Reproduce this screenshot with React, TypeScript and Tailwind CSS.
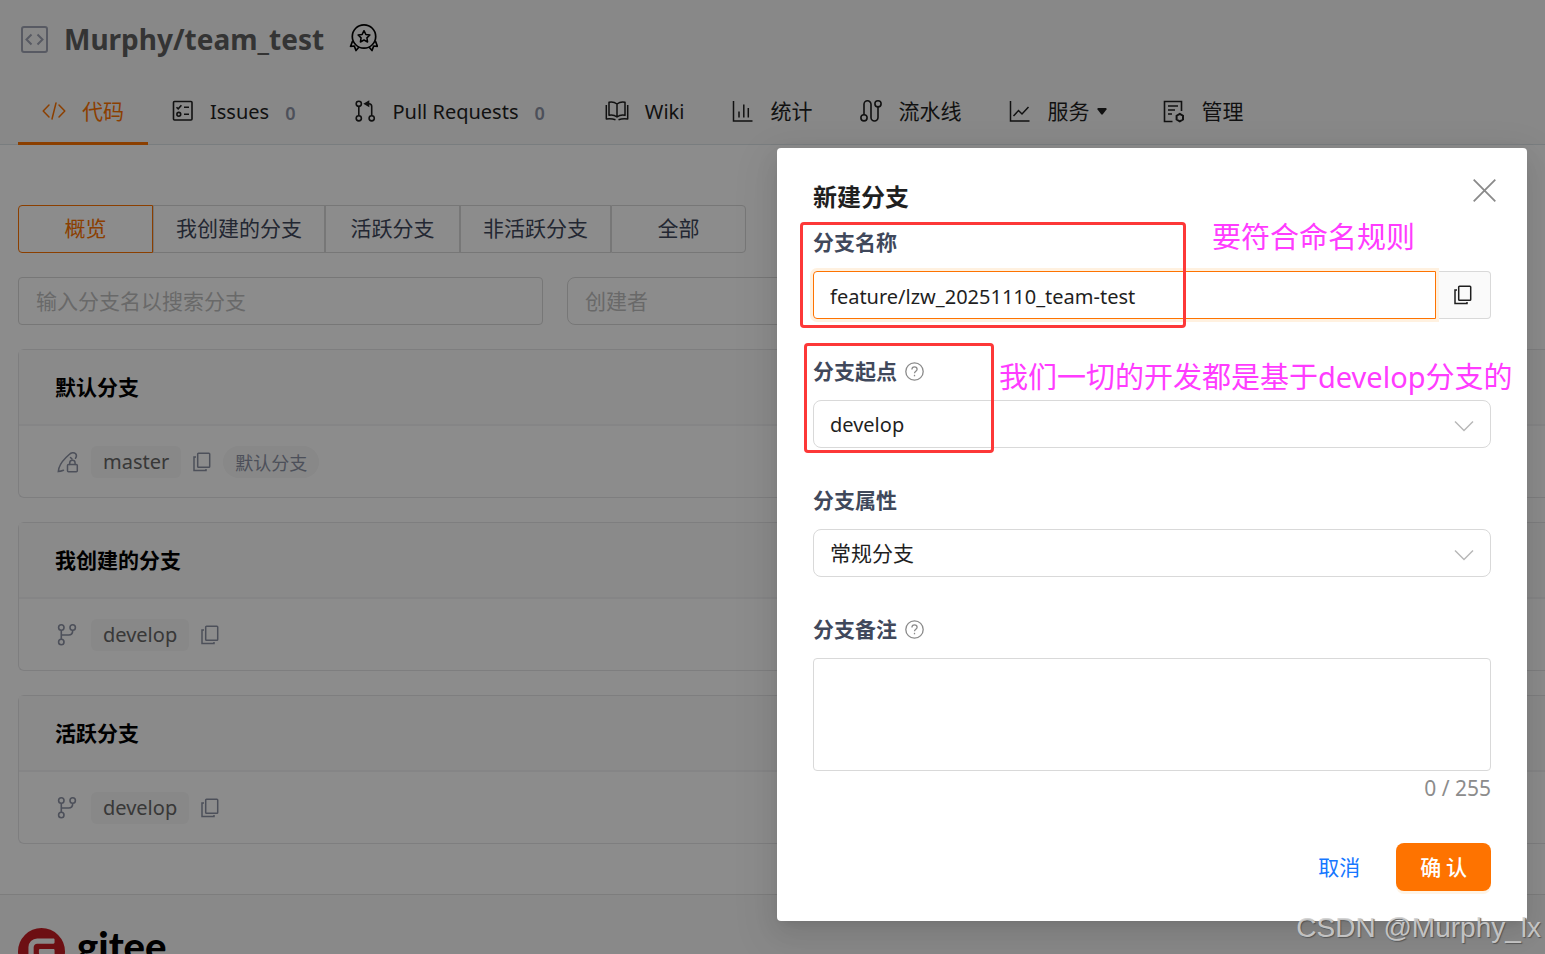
import { useState } from "react"
import type { ReactNode } from "react"
import { SiGitee } from "react-icons/si"

const sans = "font-['Noto_Sans','Noto_Sans_CJK_SC',sans-serif]"
const cjk = "font-['Noto_Sans_CJK_SC',sans-serif]"

export default function App() {
    return (
        <div className={`${sans} relative h-screen overflow-hidden bg-white text-xl text-[#1f1f1f]`}>
            <RepoHeader />
            <main className="flex flex-col gap-6 pt-[60px] pb-[50px] pl-[18px]">
                <BranchFilter />
                <div className="flex gap-6 pr-[60px]">
                    <input
                        aria-label="搜索分支"
                        placeholder="输入分支名以搜索分支"
                        className={`${cjk} h-12 w-[525px] rounded border border-[#d9d9d9] bg-white px-[17px] pb-0.5 text-[21px] placeholder:text-[#bfbfbf]`}
                    />
                    <input
                        aria-label="创建者"
                        placeholder="创建者"
                        className={`${cjk} h-12 w-[525px] rounded-lg border border-[#d9d9d9] bg-white px-[17px] pb-0.5 text-[21px] placeholder:text-[#bfbfbf]`}
                    />
                </div>
                {branchGroups.map((group) => (
                    <BranchCard key={group.title} group={group} />
                ))}
            </main>
            <footer className="flex items-start gap-3 border-t border-[#e4e4e4] bg-[#fafafa] px-[18px] pt-[33px] pb-10">
                <SiGitee className="size-[47px] text-[#c71d23]" />
                <span className="font-['Lato',sans-serif] text-[40px] leading-9 font-black text-black">gitee</span>
            </footer>

            {/* mask */}
            <div className="absolute inset-0 bg-black/45" />
            <CreateBranchModal />
            <div className="absolute right-1 bottom-2 font-['Liberation_Sans',sans-serif] text-[28px] leading-9 text-[#d0d0d0]/90 [text-shadow:1px_1px_1px_#555]">
                CSDN @Murphy_lx
            </div>
        </div>
    )
}

const RepoHeader = () => (
    <header className="border-b border-[#dce3e8] bg-[#f8f8f8]">
        <div className="flex h-[78px] items-center gap-4 pl-[21px]">
            <svg width="27" height="27" viewBox="0 0 27 27" fill="none" stroke="#a0a4b4" strokeWidth="2">
                <rect x="1" y="1" width="25" height="25" rx="2" />
                <path d="M10.5 8.5 5.5 13.5l5 5M16.5 8.5l5 5-5 5" />
            </svg>
            <h1 className="text-[28px] leading-9 font-bold text-[#606060]">Murphy/team_test</h1>
            <svg className="ml-2 mb-0.5" width="30" height="30" viewBox="0 0 30 30" fill="none" stroke="#000" strokeWidth="1.700" strokeLinejoin="round">
                <circle cx="16" cy="13.500" r="11.700" />
                <path d="m16 7.700 1.800 3.700 4.100.6-3 2.900.7 4.100-3.600-2-3.600 2 .7-4.100-3-2.900 4.100-.6z" strokeWidth="1.500" />
                <path d="M4.600 18 2.600 23.300l3.700-.3 1.700 4.500 3.200-3.700M27.400 18l2 5.300-3.700-.3-1.700 4.500-3.200-3.700" />
            </svg>
        </div>
        <nav className="-mb-px flex h-[67px] pl-[18px]">
            {navTabs.map((tab, index) => (
                <a
                    key={tab.label}
                    href="#"
                    className={`flex items-center gap-4 border-b-[3px] px-6 pt-0.5 ${index === 0 ? "border-[#fe7300] text-[#fe7300]" : "border-transparent"}`}
                >
                    {tab.icon}
                    <span className={tab.latin ? "pt-px text-xl" : `${cjk} text-[21px]`}>{tab.label}</span>
                    {tab.count !== undefined && (
                        <span className="-ml-3 px-3 pt-1 text-lg font-semibold text-[#8c92a4]">{tab.count}</span>
                    )}
                    {tab.caret && (
                        <svg className="-ml-2 mr-2" width="10" height="7" viewBox="0 0 10 7" fill="currentColor">
                            <path d="M1 0h8q1 .5.5 1.500L5.800 6.300q-.8.900-1.600 0L.5 1.500Q0 .5 1 0z" />
                        </svg>
                    )}
                </a>
            ))}
        </nav>
    </header>
)

const BranchFilter = () => {
    const [active, setActive] = useState("概览")
    return (
        <div className={`${cjk} flex text-[21px] text-[#40485b]`}>
            {filters.map((name) => (
                <button
                    key={name}
                    type="button"
                    onClick={() => setActive(name)}
                    className={`h-12 min-w-[135px] border px-[22px] pb-0.5 first:rounded-l last:rounded-r ${active === name ? "border-[#fe7300] text-[#fe7300]" : "border-[#d9d9d9]"}`}
                >
                    {name}
                </button>
            ))}
        </div>
    )
}

const BranchCard = ({ group }: { group: (typeof branchGroups)[number] }) => (
    <section className="rounded-l-md border border-r-0 border-[#e6e6e8]">
        <h2 className={`${cjk} flex h-[76px] items-center border-b-2 border-[#f3f3f5] bg-[#fbfbfb] pl-9 text-[21px] font-bold text-black`}>
            {group.title}
        </h2>
        <div className="flex h-[71px] items-center pl-[37px] text-[#8c92a4]">
            {group.locked ? <LockedBranchIcon /> : <BranchIcon />}
            <a href="#" className="ml-3 rounded-md bg-[#f7f7f7] px-3 leading-8 text-[#666]">
                {group.branch}
            </a>
            <button type="button" aria-label="复制分支名" className="ml-3">
                <CopyIcon />
            </button>
            {group.locked && (
                <span className={`${cjk} ml-3 rounded-full bg-[#f7f7f7] px-3 text-lg leading-8`}>默认分支</span>
            )}
        </div>
    </section>
)

const CreateBranchModal = () => {
    const [name, setName] = useState("feature/lzw_20251110_team-test")
    const [note, setNote] = useState("")

    return (
        <div
            role="dialog"
            aria-labelledby="modal-title"
            className="absolute top-[148px] right-[18px] w-[750px] rounded bg-white pt-[31px] pb-[30px] shadow-[0_9px_24px_0_rgba(0,0,0,0.08),0_5px_9px_-6px_rgba(0,0,0,0.12),0_14px_42px_12px_rgba(0,0,0,0.05)]"
        >
            <div className="flex items-start justify-between pr-[31px] pl-9">
                <h2 id="modal-title" className={`${cjk} text-2xl leading-[34px] font-bold`}>新建分支</h2>
                <button type="button" aria-label="关闭">
                    <svg width="23" height="23" viewBox="0 0 23 23" stroke="#8a8a8a" strokeWidth="1.8">
                        <path d="m.7.7 21.600 21.600M22.300.7.7 22.300" />
                    </svg>
                </button>
            </div>
            <form className="px-9 pt-3.5" onSubmit={(e) => e.preventDefault()}>
                <Field id="branch-name" label="分支名称">
                    <div className="flex h-12">
                        <input
                            id="branch-name"
                            value={name}
                            onChange={(e) => setName(e.target.value)}
                            className="z-10 min-w-0 flex-1 rounded-l border border-[#fe7300] px-4 pt-1 text-xl shadow-[0_0_0_3px_#fff1e0] outline-none"
                        />
                        <button
                            type="button"
                            aria-label="复制"
                            className="flex w-[55px] items-center justify-center rounded-r border border-l-0 border-[#d9d9d9] bg-[#fafafa]"
                        >
                            <CopyIcon />
                        </button>
                    </div>
                </Field>
                <Field id="branch-from" label="分支起点" help>
                    <SelectBox id="branch-from" options={["develop", "master"]} />
                </Field>
                <Field id="branch-type" label="分支属性">
                    <SelectBox id="branch-type" options={["常规分支", "保护分支"]} />
                </Field>
                <div>
                    <FieldLabel id="branch-note" label="分支备注" help />
                    <textarea
                        id="branch-note"
                        value={note}
                        maxLength={255}
                        onChange={(e) => setNote(e.target.value)}
                        className="block h-[113px] w-full resize-none rounded border border-[#d9d9d9] px-4 py-2"
                    />
                    <div className="text-right text-[21px] leading-[34px] text-[#8c8c8c]">{note.length} / 255</div>
                </div>
                <div className={`${cjk} mt-[38px] flex justify-end gap-3 text-[21px]`}>
                    <button type="button" className="h-12 px-6 text-[#1677ff]">取消</button>
                    <button type="submit" className="h-12 rounded-lg bg-[#fe7300] px-6 font-medium text-white shadow-[0_3px_0_#fff4e6]">
                        确 认
                    </button>
                </div>
            </form>

            {/* annotations drawn over the form */}
            <div className="pointer-events-none absolute top-[74px] left-[23px] z-20 h-[106px] w-[386px] rounded border-[3px] border-[#fd3838]" />
            <div className="pointer-events-none absolute top-[195px] left-[27px] z-20 h-[110px] w-[190px] rounded border-[3px] border-[#fd3838]" />
            <p className="absolute top-[71px] left-[435px] text-[29px] leading-9 whitespace-nowrap text-[#ff3cff]">要符合命名规则</p>
            <p className="absolute top-[211px] left-[222px] text-[29px] leading-9 whitespace-nowrap text-[#ff3cff]">
                我们一切的开发都是基于develop分支的
            </p>
        </div>
    )
}

const FieldLabel = ({ id, label, help }: { id: string; label: string; help?: boolean }) => (
    <div className="mb-3 flex h-8 items-center gap-2 pb-0.5">
        <label htmlFor={id} className={`${cjk} text-[21px] font-bold text-[#40485b]`}>{label}</label>
        {help && (
            <svg width="19" height="19" viewBox="0 0 19 19" fill="none" stroke="#8a8a8a" strokeWidth="1.3">
                <circle cx="9.500" cy="9.500" r="8.700" />
                <path d="M6.900 7.500c0-1.700 1.200-2.700 2.600-2.700s2.600 1 2.600 2.500c0 1.900-2.600 2-2.600 4" />
                <path d="M9.500 12.800v1.500" />
            </svg>
        )}
    </div>
)

const Field = ({ id, label, help, children }: { id: string; label: string; help?: boolean; children: ReactNode }) => (
    <div className="mb-[37px]">
        <FieldLabel id={id} label={label} help={help} />
        {children}
    </div>
)

const SelectBox = ({ id, options }: { id: string; options: string[] }) => (
    <div className="grid items-center">
        <select
            id={id}
            className={`col-start-1 row-start-1 h-12 w-full appearance-none rounded-lg border border-[#d9d9d9] bg-white px-4 pt-0.5 ${options[0] === "develop" ? "text-xl" : "text-[21px]"}`}
        >
            {options.map((option) => (
                <option key={option}>{option}</option>
            ))}
        </select>
        <svg className="pointer-events-none col-start-1 row-start-1 mt-1 mr-[17px] justify-self-end" width="20" height="12" viewBox="0 0 20 12" fill="none" stroke="#b8b8b8" strokeWidth="1.5">
            <path d="m1 1.500 9 9 9-9" />
        </svg>
    </div>
)

const CopyIcon = () => (
    <svg width="18" height="20" viewBox="0 0 18 20" fill="none" stroke="currentColor" strokeWidth="1.5">
        <rect x="4.700" y="1.200" width="12" height="14" rx=".8" />
        <path d="M3 5H1v13.600h12v-1.600" />
    </svg>
)

const BranchIcon = () => (
    <svg width="23" height="24" viewBox="0 0 23 24" fill="none" stroke="currentColor" strokeWidth="1.6">
        <circle cx="5.300" cy="4.500" r="2.700" />
        <circle cx="16.700" cy="4.500" r="2.700" />
        <circle cx="5.300" cy="19" r="2.700" />
        <path d="M5.300 7.200v9.100M5.300 12h7.400q4 0 4-4.800" />
    </svg>
)

const LockedBranchIcon = () => (
    <svg width="23" height="24" viewBox="0 0 23 24" fill="none" stroke="currentColor" strokeWidth="1.5" strokeLinecap="round">
        <path d="M7.500 20.300c-2 .8-3.500 1.200-5.200 1.300C2.500 16 5.500 12 10 7.500l3.500-3.300C15 2.500 18 2 19.700 3.800c1 1.300.8 3.200-.2 4.500M14.500 7.500l1.500 1.500" />
        <rect x="11.500" y="14.500" width="9.800" height="7.200" rx="1" />
        <path d="M13.700 14.500v-1.500a2.700 2.700 0 0 1 5.400 0v1.500" />
    </svg>
)

const CodeIcon = () => (
    <svg width="24" height="20" viewBox="0 0 24 20" fill="none" stroke="currentColor" strokeWidth="1.500" strokeLinecap="round" strokeLinejoin="round">
        <path d="M7 4 1.200 10 7 16M17 4l5.800 6L17 16M14 2l-4 16" />
    </svg>
)

const IssuesIcon = () => (
    <svg width="22" height="22" viewBox="0 0 22 22" fill="none" stroke="currentColor" strokeWidth="1.600">
        <rect x="1.500" y="1.500" width="18.500" height="18.500" rx="1" />
        <path d="m4.500 7.200 1.700 1.700 3.200-3.600M12 7.200h5M12 14.300h5" />
        <circle cx="6.800" cy="14.300" r="1.900" />
    </svg>
)

const PullIcon = () => (
    <svg width="21" height="24" viewBox="0 0 21 24" fill="none" stroke="currentColor" strokeWidth="1.600">
        <circle cx="3.800" cy="4.800" r="2.600" />
        <circle cx="3.800" cy="19.300" r="2.600" />
        <circle cx="16.700" cy="19.300" r="2.600" />
        <path d="M3.800 7.400v9.300M16.700 16.700V7.500q0-2.700-2.700-2.700h-2" />
        <path d="m8.300 4.800 6-3.500v7z" fill="currentColor" stroke="none" />
    </svg>
)

const WikiIcon = () => (
    <svg width="24" height="22" viewBox="0 0 24 22" fill="none" stroke="currentColor" strokeWidth="1.500" strokeLinejoin="round">
        <path d="M12 4Q8.500 1.300 4 2.300v13Q8.500 14.300 12 17q3.500-2.700 8-1.700v-13Q15.500 1.300 12 4zM12 4v13" />
        <path d="M1.300 5v14q5-.8 9.200.8M22.700 5v14q-5-.8-9.200.8" />
    </svg>
)

const StatsIcon = () => (
    <svg width="22" height="22" viewBox="0 0 22 22" fill="none" stroke="currentColor" strokeWidth="1.500">
        <path d="M1.500 1v20h19M7 11.500v6M11.800 4.500v13M16.300 8v9.500" />
    </svg>
)

const PipelineIcon = () => (
    <svg width="22" height="24" viewBox="0 0 22 24" fill="none" stroke="currentColor" strokeWidth="1.600">
        <circle cx="4" cy="18.800" r="3.100" />
        <circle cx="18" cy="4.800" r="3.100" />
        <path d="M4 15.700V5.300a3.500 3.500 0 0 1 7 0v13.200a3.500 3.500 0 0 0 7 0V7.900" />
    </svg>
)

const ServiceIcon = () => (
    <svg width="22" height="22" viewBox="0 0 22 22" fill="none" stroke="currentColor" strokeWidth="1.500">
        <path d="M1.500 1v20h19M4.500 16l5-5.500 3.500 3.500 6.500-7" />
    </svg>
)

const ManageIcon = () => (
    <svg width="22" height="23" viewBox="0 0 22 23" fill="none" stroke="currentColor" strokeWidth="1.600">
        <path d="M9.500 21.500h-8v-20h17V11M5 6h10M5 10h7M5 14h4" />
        <path d="m16.800 13.800 3.200 1.900v3.800l-3.200 1.900-3.200-1.900v-3.800z" strokeWidth="2" />
    </svg>
)

type NavTab = { label: string; icon: ReactNode; latin?: boolean; count?: number; caret?: boolean }

const navTabs: NavTab[] = [
    { label: "代码", icon: <CodeIcon /> },
    { label: "Issues", icon: <IssuesIcon />, latin: true, count: 0 },
    { label: "Pull Requests", icon: <PullIcon />, latin: true, count: 0 },
    { label: "Wiki", icon: <WikiIcon />, latin: true },
    { label: "统计", icon: <StatsIcon /> },
    { label: "流水线", icon: <PipelineIcon /> },
    { label: "服务", icon: <ServiceIcon />, caret: true },
    { label: "管理", icon: <ManageIcon /> },
]

const filters = ["概览", "我创建的分支", "活跃分支", "非活跃分支", "全部"]

const branchGroups = [
    { title: "默认分支", branch: "master", locked: true },
    { title: "我创建的分支", branch: "develop", locked: false },
    { title: "活跃分支", branch: "develop", locked: false },
]
